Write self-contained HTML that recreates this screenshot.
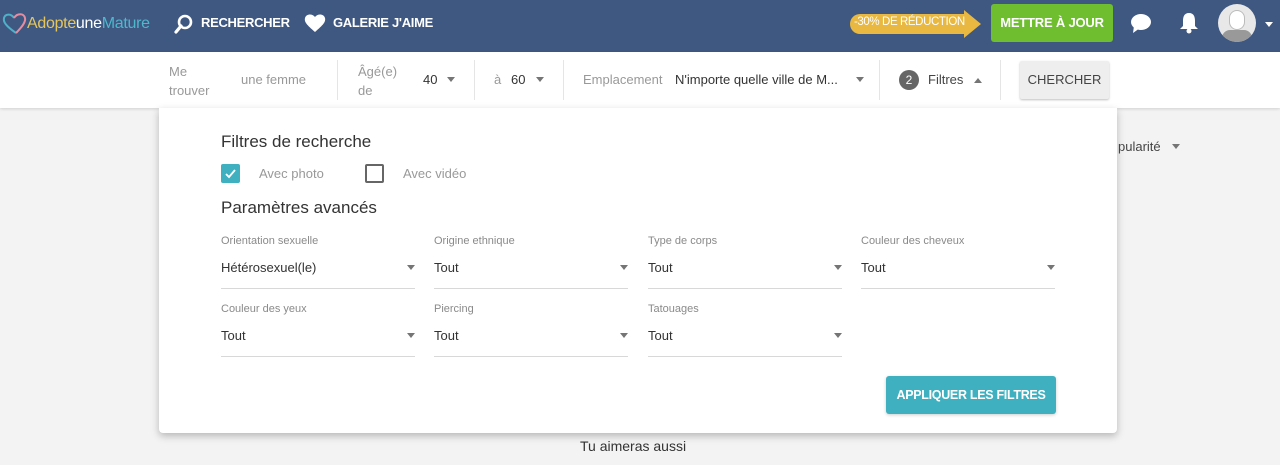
<!DOCTYPE html>
<html><head><meta charset="utf-8"><style>
*{margin:0;padding:0;box-sizing:border-box}
body{width:1280px;height:465px;overflow:hidden;background:#f3f3f3;font-family:"Liberation Sans",Arial,sans-serif;position:relative}
.a{position:absolute;white-space:nowrap}
.hdr{position:absolute;left:0;top:0;width:1280px;height:52px;background:#3f5881}
.bar{position:absolute;left:0;top:52px;width:1280px;height:56px;background:#fff;box-shadow:0 1px 3px rgba(0,0,0,.15)}
.nav{color:#fff;font-weight:bold;font-size:13px;letter-spacing:-0.3px}
.g{color:#999;font-size:13px}
.d{color:#333;font-size:13px}
.sep{position:absolute;top:60px;width:1px;height:40px;background:#e5e5e5}
.tri{position:absolute;width:0;height:0;border-left:4px solid transparent;border-right:4px solid transparent;border-top:5px solid #757575}
.panel{position:absolute;left:159px;top:108px;width:958px;height:325px;background:#fff;border-radius:0 0 4px 4px;box-shadow:0 3px 8px rgba(0,0,0,.25)}
.lbl{color:#8a8a8a;font-size:11px}
.val{color:#333;font-size:13px}
.ul{position:absolute;height:1px;background:#d8d8d8;width:194px}
</style></head><body>
<div class="hdr"></div>
<svg class="a" style="left:2px;top:12px" width="30" height="24" viewBox="0 0 30 24"><path d="M14 21 C4 14 1 10 2 6 C3 2 9 1 12 6" fill="none" stroke="#4fb1c8" stroke-width="2"/><path d="M12 6 C15 1 22 1 23 6 C24 10 20 15 14 21" fill="none" stroke="#e58ca0" stroke-width="2"/></svg>
<div class="a" style="left:27px;top:15px;font-size:16px;letter-spacing:-0.3px"><span style="color:#e6c55c">Adopte</span><span style="color:#fff">une</span><span style="color:#4db8cc">Mature</span></div>
<svg class="a" style="left:173px;top:13px" width="22" height="22" viewBox="0 0 22 22"><circle cx="12" cy="9" r="6" fill="none" stroke="#fff" stroke-width="2.6"/><path d="M8 13 L3 19" stroke="#fff" stroke-width="3.2" stroke-linecap="round"/></svg>
<div class="a nav" style="left:201px;top:15px">RECHERCHER</div>
<svg class="a" style="left:304px;top:13px" width="22" height="20" viewBox="0 0 22 20"><path d="M11 19 C3 12 0 9 1 5 C2 1 8 0 11 4 C14 0 20 1 21 5 C22 9 19 12 11 19Z" fill="#fff"/></svg>
<div class="a nav" style="left:333px;top:15px">GALERIE J'AIME</div>
<svg class="a" style="left:850px;top:10px" width="132" height="28" viewBox="0 0 132 28"><path d="M10 4 H114 V0 L131 14 L114 28 V24 H10 A10 10 0 0 1 10 4Z" fill="#e8b840"/></svg>
<div class="a" style="left:854px;top:16px;font-size:11.5px;color:#fff;letter-spacing:-0.4px">-30% DE RÉDUCTION</div>
<div class="a" style="left:991px;top:4px;width:122px;height:38px;background:#6ebe2f;border-radius:3px;color:#fff;font-weight:bold;font-size:13px;text-align:center;line-height:38px;letter-spacing:-0.2px">METTRE À JOUR</div>
<svg class="a" style="left:1130px;top:12px" width="22" height="22" viewBox="0 0 22 22"><ellipse cx="11" cy="10" rx="10" ry="8" fill="#fff"/><path d="M4 14 L3 21 L10 16Z" fill="#fff"/></svg>
<svg class="a" style="left:1178px;top:11px" width="22" height="24" viewBox="0 0 22 24"><path d="M11 2 C6 2 5 6 5 10 V15 L2 18 H20 L17 15 V10 C17 6 16 2 11 2Z" fill="#fff"/><circle cx="11" cy="20" r="2.5" fill="#fff"/></svg>
<div class="a" style="left:1218px;top:4px;width:38px;height:38px;border-radius:50%;background:#e8e8e8;overflow:hidden"><div style="position:absolute;left:11px;top:6px;width:16px;height:20px;border-radius:8px;background:#fff;border:1px solid #bbb"></div><div style="position:absolute;left:4px;top:26px;width:30px;height:16px;border-radius:12px;background:#999"></div></div>
<div class="tri" style="left:1265px;top:22px;border-top-color:#fff"></div>

<div class="bar"></div>
<div class="a g" style="left:169px;top:62px;line-height:19px">Me<br>trouver</div>
<div class="a g" style="left:241px;top:72px">une femme</div>
<div class="sep" style="left:337px"></div>
<div class="a g" style="left:358px;top:62px;line-height:19px">Âgé(e)<br>de</div>
<div class="a d" style="left:423px;top:72px">40</div><div class="tri" style="left:447px;top:77px"></div>
<div class="sep" style="left:474px"></div>
<div class="a g" style="left:494px;top:72px">à</div>
<div class="a d" style="left:511px;top:72px">60</div><div class="tri" style="left:536px;top:77px"></div>
<div class="sep" style="left:563px"></div>
<div class="a g" style="left:583px;top:72px">Emplacement</div>
<div class="a d" style="left:675px;top:72px">N'importe quelle ville de M...</div><div class="tri" style="left:856px;top:77px"></div>
<div class="sep" style="left:879px"></div>
<div class="a" style="left:899px;top:70px;width:20px;height:20px;border-radius:50%;background:#666;color:#fff;font-size:12px;text-align:center;line-height:20px">2</div>
<div class="a d" style="left:928px;top:72px;color:#444">Filtres</div>
<div class="tri" style="left:974px;top:78px;border-top:none;border-bottom:5px solid #757575"></div>
<div class="sep" style="left:1000px"></div>
<div class="a" style="left:1020px;top:61px;width:89px;height:38px;background:#eee;border-radius:2px;box-shadow:0 1px 2px rgba(0,0,0,.25);color:#444;font-size:13px;text-align:center;line-height:38px">CHERCHER</div>

<div class="a" style="left:580px;top:438px;font-size:14px;color:#333">Tu aimeras aussi</div>

<div class="panel"></div>
<div class="a d" style="left:1118px;top:139px;color:#444">pularité</div><div class="tri" style="left:1172px;top:144px"></div>
<div class="a" style="left:221px;top:132px;font-size:17px;color:#333">Filtres de recherche</div>
<div class="a" style="left:221px;top:164px;width:19px;height:19px;background:#3eb0c0;border-radius:2px"><svg width="19" height="19" viewBox="0 0 19 19"><path d="M5 10 L8 13 L14 6" fill="none" stroke="#fff" stroke-width="1.8"/></svg></div>
<div class="a g" style="left:259px;top:166px;color:#999">Avec photo</div>
<div class="a" style="left:365px;top:164px;width:19px;height:19px;border:2px solid #666;border-radius:2px"></div>
<div class="a g" style="left:403px;top:166px">Avec vidéo</div>
<div class="a" style="left:221px;top:198px;font-size:17px;color:#333">Paramètres avancés</div>

<div class="a lbl" style="left:221px;top:235px">Orientation sexuelle</div><div class="a val" style="left:221px;top:260px">Hétérosexuel(le)</div><div class="tri" style="left:407px;top:265px"></div><div class="ul" style="left:221px;top:288px"></div>
<div class="a lbl" style="left:434px;top:235px">Origine ethnique</div><div class="a val" style="left:434px;top:260px">Tout</div><div class="tri" style="left:620px;top:265px"></div><div class="ul" style="left:434px;top:288px"></div>
<div class="a lbl" style="left:648px;top:235px">Type de corps</div><div class="a val" style="left:648px;top:260px">Tout</div><div class="tri" style="left:834px;top:265px"></div><div class="ul" style="left:648px;top:288px"></div>
<div class="a lbl" style="left:861px;top:235px">Couleur des cheveux</div><div class="a val" style="left:861px;top:260px">Tout</div><div class="tri" style="left:1047px;top:265px"></div><div class="ul" style="left:861px;top:288px"></div>
<div class="a lbl" style="left:221px;top:303px">Couleur des yeux</div><div class="a val" style="left:221px;top:328px">Tout</div><div class="tri" style="left:407px;top:333px"></div><div class="ul" style="left:221px;top:356px"></div>
<div class="a lbl" style="left:434px;top:303px">Piercing</div><div class="a val" style="left:434px;top:328px">Tout</div><div class="tri" style="left:620px;top:333px"></div><div class="ul" style="left:434px;top:356px"></div>
<div class="a lbl" style="left:648px;top:303px">Tatouages</div><div class="a val" style="left:648px;top:328px">Tout</div><div class="tri" style="left:834px;top:333px"></div><div class="ul" style="left:648px;top:356px"></div>

<div class="a" style="left:886px;top:376px;width:170px;height:38px;background:#3eb0c0;border-radius:3px;box-shadow:0 1px 3px rgba(0,0,0,.2);color:#fff;font-weight:bold;font-size:12.5px;text-align:center;line-height:38px;letter-spacing:-0.3px">APPLIQUER LES FILTRES</div>
</body></html>
